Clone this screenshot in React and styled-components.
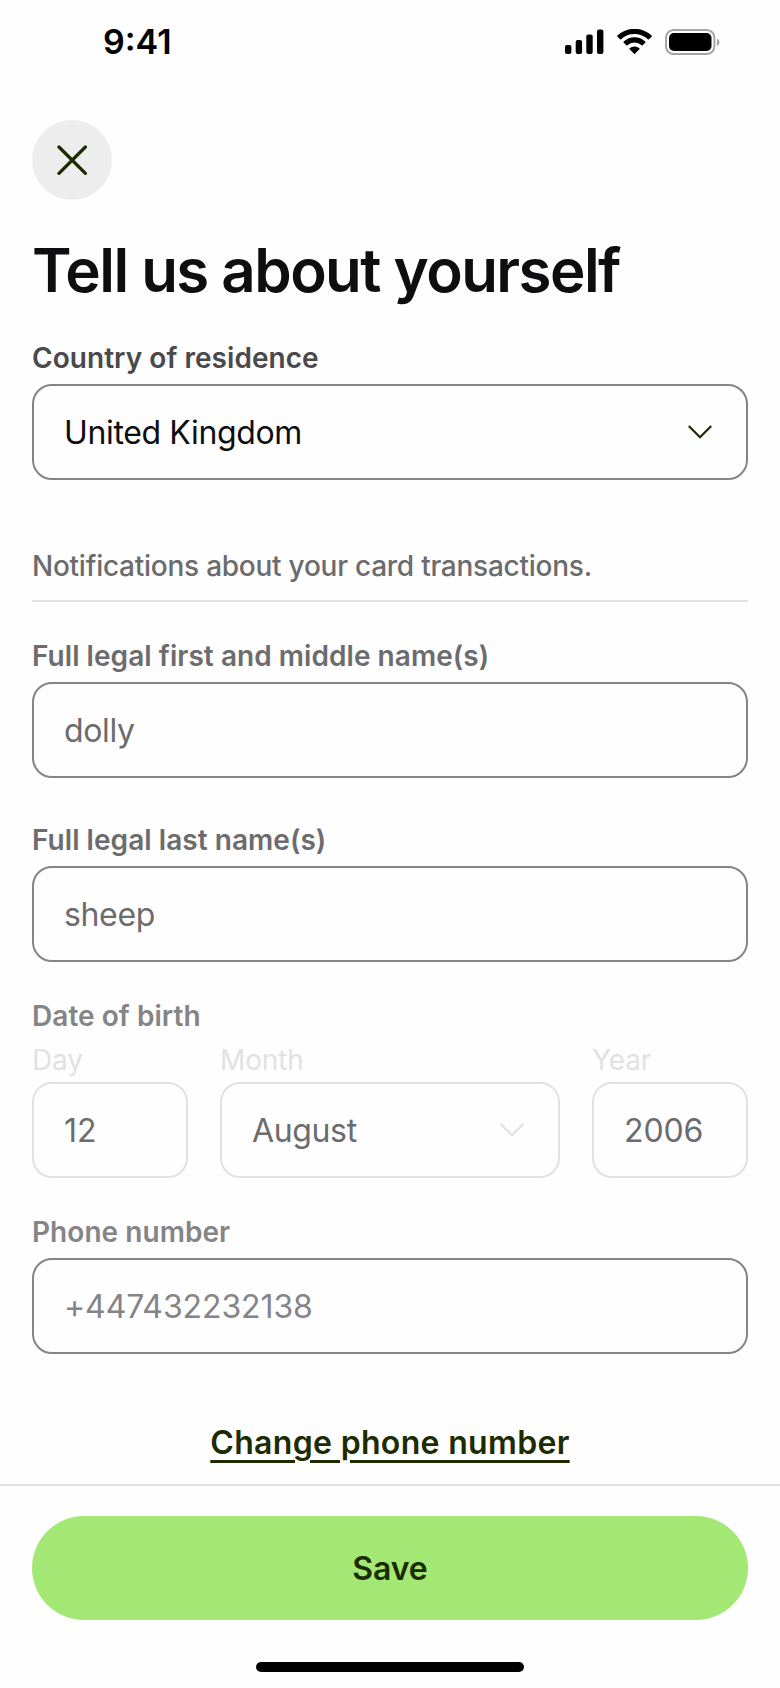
import React from 'react'
import styled, { createGlobalStyle } from 'styled-components'

const GlobalStyle = createGlobalStyle`
  * {
    box-sizing: border-box;
  }
  body {
    margin: 0;
    background: #fefefe;
    font-family: Inter, "Liberation Sans", sans-serif;
  }
`

const Screen = styled.div`
  width: 780px;
  height: 1688px;
  display: flex;
  flex-direction: column;
  overflow: hidden;
  background: #fefefe;
`

const StatusBar = styled.header`
  height: 84px;
  padding: 0 60px 0 103px;
  display: flex;
  justify-content: space-between;
`

const Time = styled.span`
  padding-top: 22px;
  font-size: 34px;
  line-height: 40px;
  font-weight: 600;
  color: #000;
`

const StatusIcons = styled.div`
  padding-top: 29px;
  display: flex;
  align-items: flex-start;
  gap: 13px;
`

const Main = styled.main`
  flex: 1;
  padding: 36px 32px 0;
  display: flex;
  flex-direction: column;
`

const CloseButton = styled.button`
  width: 80px;
  height: 80px;
  padding: 0;
  border: 0;
  border-radius: 50%;
  background: #ededed;
  display: flex;
  align-items: center;
  justify-content: center;
`

const Title = styled.h1`
  margin: 34px 0;
  font-size: 60px;
  line-height: 72px;
  font-weight: 600;
  letter-spacing: -1.55px;
  color: #0e0d10;
`

const Field = styled.div`
  display: flex;
  flex-direction: column;
  gap: ${props => props.$gap || '8px'};
  margin-bottom: ${props => props.$space || '0'};
`

const Label = styled.label`
  font-size: 28px;
  line-height: 36px;
  font-weight: ${props => (props.$light ? 400 : 600)};
  letter-spacing: ${props => (props.$light ? '-0.15px' : '0.05px')};
  color: ${props => props.$color || '#6c6b6d'};
`

const Box = styled.div`
  height: 96px;
  padding: 0 34px 0 30px;
  border: 2px solid ${props => (props.$faded ? '#e2e1e3' : '#858486')};
  border-radius: 20px;
  display: flex;
  align-items: center;
  justify-content: space-between;
  font-size: 32px;
  letter-spacing: ${props => (props.$numeric ? '-0.1px' : '-0.36px')};
  color: ${props => props.$color || '#6c6b6d'};
`

const Note = styled.p`
  margin: 0 0 36px;
  padding-bottom: 16px;
  border-bottom: 2px solid #e2e2e2;
  font-size: 28px;
  line-height: 36px;
  font-weight: 500;
  letter-spacing: -0.25px;
  color: #6c6b6d;
`

const DateRow = styled.div`
  display: grid;
  grid-template-columns: 156px 340px 156px;
  gap: 32px;
`

const ChangeLink = styled.a`
  margin-top: 65px;
  align-self: center;
  font-size: 32px;
  line-height: 48px;
  font-weight: 600;
  letter-spacing: 0.32px;
  color: #1c2c00;
  text-decoration: underline;
  text-decoration-thickness: 2.5px;
  text-underline-offset: 6px;
`

const Footer = styled.footer`
  height: 204px;
  padding: 30px 32px 0;
  border-top: 2px solid #e2e2e2;
  display: flex;
  flex-direction: column;
  align-items: center;
`

const SaveButton = styled.button`
  width: 100%;
  height: 104px;
  border: 0;
  border-radius: 52px;
  background: #a3e874;
  font-family: inherit;
  font-size: 32px;
  font-weight: 600;
  letter-spacing: -0.1px;
  color: #1c2c00;
`

const HomeBar = styled.div`
  width: 268px;
  height: 10px;
  margin-top: 42px;
  border-radius: 5px;
  background: #000;
`

const Signal = () => (
  <svg width="39" height="25" viewBox="0 0 39 25">
    <rect x="0" y="16" width="6.4" height="9" rx="2" />
    <rect x="10.7" y="11" width="6.4" height="14" rx="2" />
    <rect x="21.3" y="5.5" width="6.4" height="19.5" rx="2" />
    <rect x="32" y="0.5" width="6.4" height="24.5" rx="2" />
  </svg>
)

const Wifi = () => (
  <svg width="35" height="25" viewBox="0 0 17.15 12.42">
    <path d="M8.57 2.47c2.49 0 4.88.96 6.68 2.66.14.13.35.13.49 0l1.3-1.31a.36.36 0 0 0 0-.53c-4.73-4.54-12.2-4.54-16.93 0a.36.36 0 0 0 0 .53l1.3 1.31c.13.13.35.13.48 0A9.7 9.7 0 0 1 8.57 2.47z" />
    <path d="M8.57 6.75a5.3 5.3 0 0 1 3.56 1.38c.14.13.35.13.49 0l1.3-1.33a.38.38 0 0 0 0-.54 7.8 7.8 0 0 0-10.7 0 .38.38 0 0 0 0 .54l1.3 1.33c.14.13.36.13.49 0a5.3 5.3 0 0 1 3.56-1.38z" />
    <path d="M11.12 9.8a.36.36 0 0 1-.1.27l-2.25 2.27a.27.27 0 0 1-.39 0L6.13 10.07a.36.36 0 0 1 .01-.53 3.8 3.8 0 0 1 4.87 0 .36.36 0 0 1 .11.26z" />
  </svg>
)

const Battery = () => (
  <svg width="55" height="26" viewBox="0 0 55 26">
    <rect x="1" y="1" width="48.4" height="24" rx="7.6" fill="none" stroke="#a6a6a6" strokeWidth="2" />
    <rect x="4" y="4" width="42.5" height="18" rx="5" />
    <path d="M52 9.5a4 4 0 0 1 0 7.4z" fill="#a6a6a6" />
  </svg>
)

const Cross = () => (
  <svg width="30" height="30" viewBox="0 0 30 30" stroke="#1c2c00" strokeWidth="3.3" strokeLinecap="round" fill="none">
    <path d="M2 2l26.4 26.4M28.4 2L2 28.4" />
  </svg>
)

const Chevron = ({ color = '#1c2c00' }) => (
  <svg width="24" height="14" viewBox="0 0 24 14" stroke={color} strokeWidth="2.2" fill="none">
    <path d="M0.8 1l11.2 11.2L23.2 1" />
  </svg>
)

const App = () => {
  return (
    <Screen>
      <GlobalStyle />
      <StatusBar>
        <Time>9:41</Time>
        <StatusIcons>
          <Signal />
          <Wifi />
          <Battery />
        </StatusIcons>
      </StatusBar>
      <Main>
        <CloseButton aria-label="Close">
          <Cross />
        </CloseButton>
        <Title>Tell us about yourself</Title>
        <Field $space="68px">
          <Label $color="#4a494b">Country of residence</Label>
          <Box $color="#0e0d10">
            United Kingdom
            <Chevron />
          </Box>
        </Field>
        <Note>Notifications about your card transactions.</Note>
        <Field $space="44px">
          <Label>Full legal first and middle name(s)</Label>
          <Box>dolly</Box>
        </Field>
        <Field $space="36px">
          <Label>Full legal last name(s)</Label>
          <Box>sheep</Box>
        </Field>
        <Field $space="36px">
          <Label $color="#858486">Date of birth</Label>
          <DateRow>
            <Field $gap="4px">
              <Label $light $color="#e2e1e3">Day</Label>
              <Box $faded $numeric>12</Box>
            </Field>
            <Field $gap="4px">
              <Label $light $color="#e2e1e3">Month</Label>
              <Box $faded>
                August
                <Chevron color="#e2e1e3" />
              </Box>
            </Field>
            <Field $gap="4px">
              <Label $light $color="#e2e1e3">Year</Label>
              <Box $faded $numeric>2006</Box>
            </Field>
          </DateRow>
        </Field>
        <Field>
          <Label $color="#858486">Phone number</Label>
          <Box $numeric $color="#858486">+447432232138</Box>
        </Field>
        <ChangeLink>Change phone number</ChangeLink>
      </Main>
      <Footer>
        <SaveButton>Save</SaveButton>
        <HomeBar />
      </Footer>
    </Screen>
  )
}

export default App
